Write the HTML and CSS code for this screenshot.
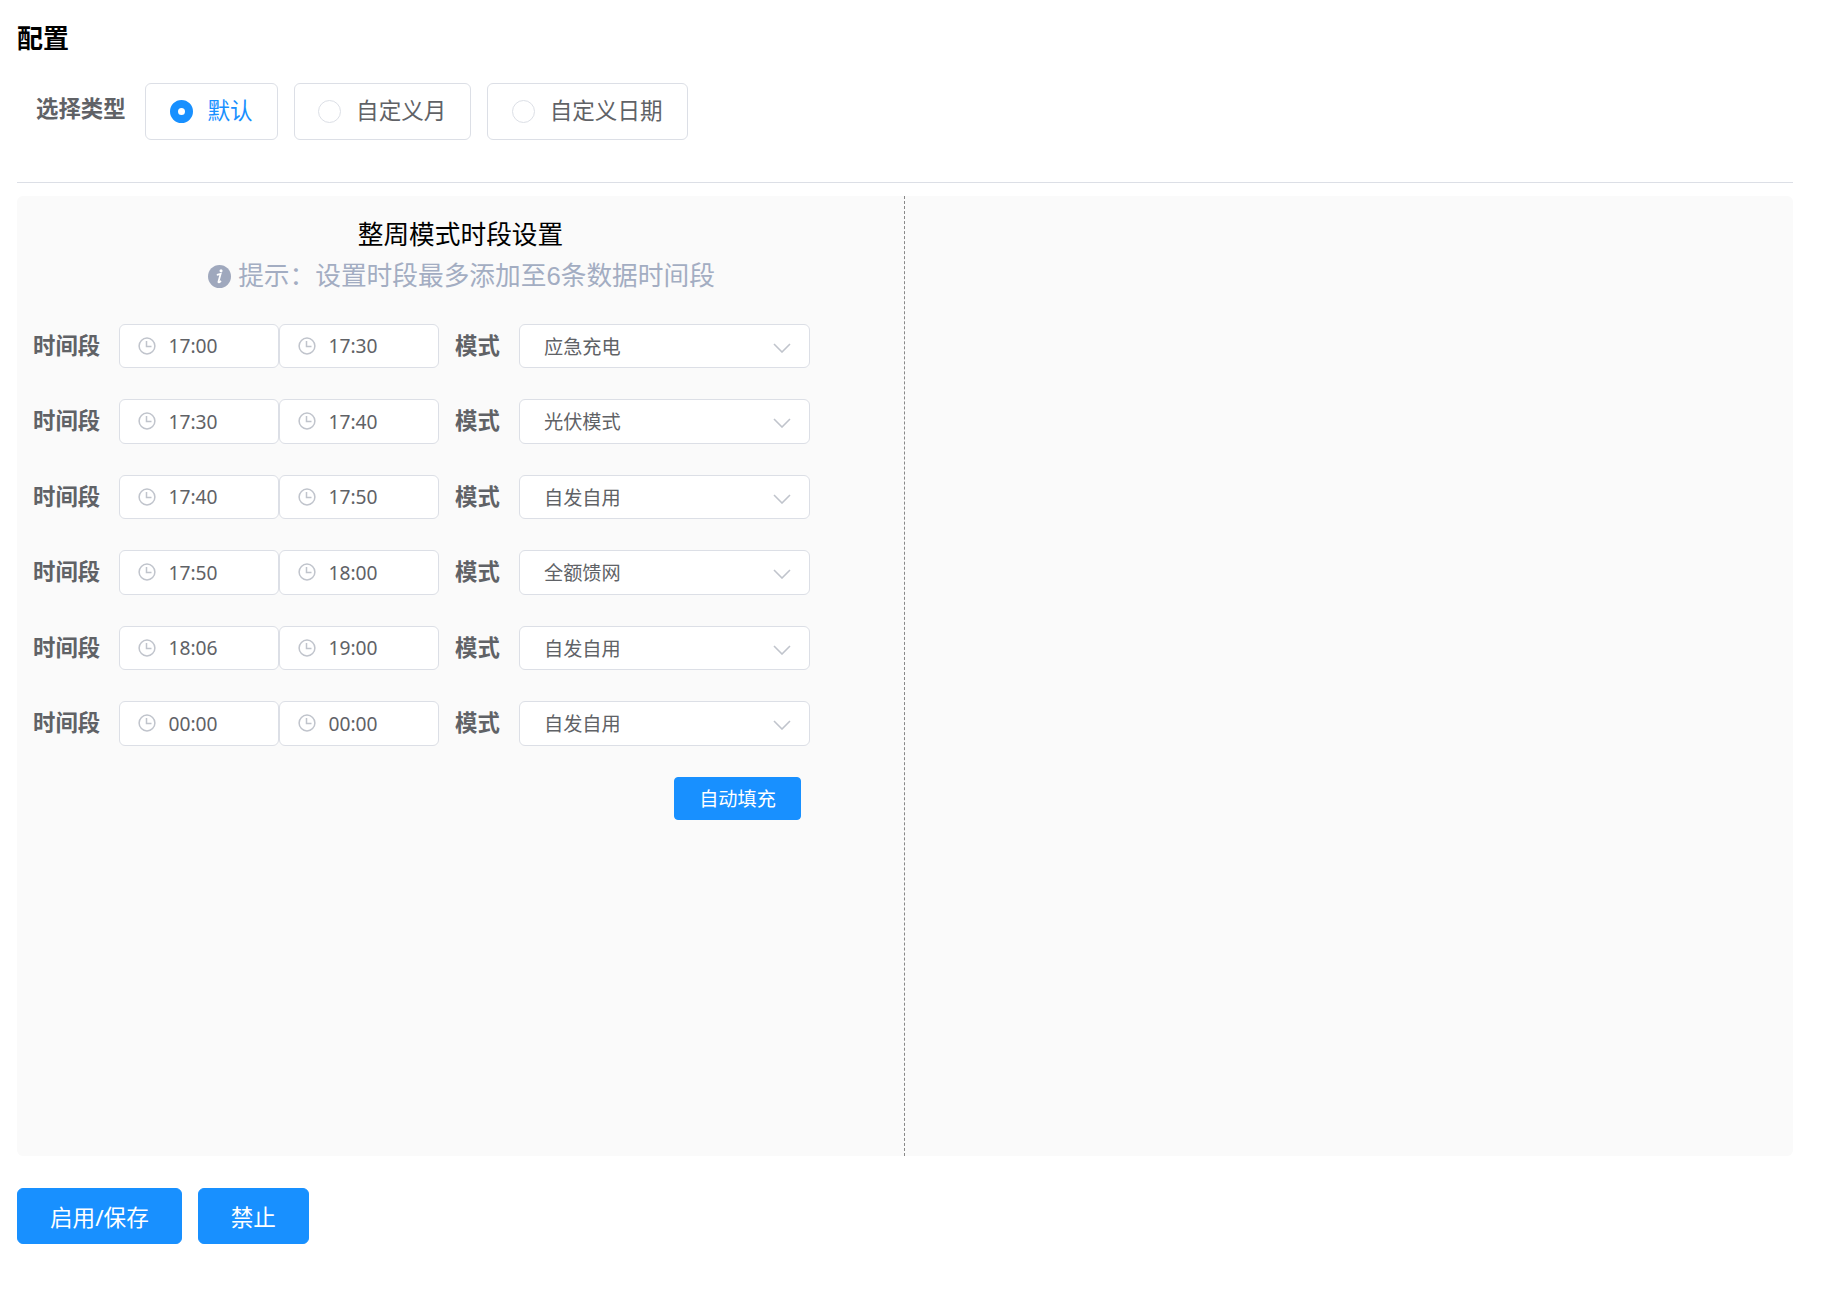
FILE: index.html
```
<!DOCTYPE html>
<html lang="zh-CN">

<head>
    <meta charset="UTF-8">
    <meta name="viewport" content="width=device-width, initial-scale=1.0">
    <title>配置</title>
    <link rel="stylesheet" href="styles.css">
</head>

<body>
    <svg class="sprite">
        <symbol id="clock" viewBox="0 0 18 18">
            <circle cx="9" cy="9" r="7.9" />
            <path d="M8.5 4v5.5h5" />
        </symbol>
        <symbol id="arrow" viewBox="0 0 18 10">
            <path d="M1 1l8 8 8-8" />
        </symbol>
    </svg>

    <h1>配置</h1>

    <div class="type-row">
        <span class="label">选择类型</span>
        <div class="radio checked"><i class="dot"></i><span>默认</span></div>
        <div class="radio"><i class="dot"></i><span>自定义月</span></div>
        <div class="radio"><i class="dot"></i><span>自定义日期</span></div>
    </div>

    <div class="panel">
        <div class="left">
            <h2>整周模式时段设置</h2>
            <p class="tip">
                <svg class="info" viewBox="0 0 24 24">
                    <circle cx="12" cy="12" r="12" />
                    <circle class="mark" cx="13.6" cy="6" r="1.6" />
                    <path class="stem" d="M9.200 10.400c1.300-.2 2.500-.7 4-1.200l-2.300 8.200c-.3 1.300.8 1 2.600-.9" />
                </svg>
                <span>提示：设置时段最多添加至6条数据时间段</span>
            </p>
            <div id="rows"></div>
            <button class="btn fill">自动填充</button>
        </div>
        <div class="right"></div>
    </div>

    <div class="footer">
        <button class="btn">启用/保存</button>
        <button class="btn">禁止</button>
    </div>

    <script>
        const periods = [
            ['17:00', '17:30', '应急充电'],
            ['17:30', '17:40', '光伏模式'],
            ['17:40', '17:50', '自发自用'],
            ['17:50', '18:00', '全额馈网'],
            ['18:06', '19:00', '自发自用'],
            ['00:00', '00:00', '自发自用']
        ];

        function timeInput(time) {
            return `<div class="time"><svg class="clock"><use href="#clock"/></svg><span>${time}</span></div>`;
        }

        document.getElementById('rows').innerHTML = periods.map(([start, end, mode]) => `
            <div class="row">
                <span class="label">时间段</span>
                ${timeInput(start)}${timeInput(end)}
                <span class="label mode">模式</span>
                <div class="select"><span>${mode}</span><svg class="arrow"><use href="#arrow"/></svg></div>
            </div>`).join('');
    </script>
</body>

</html>
```

FILE: styles.css
```
* {
    box-sizing: border-box;
}

body {
    margin: 0;
    padding: 20px 32px 0 17px;
    font-family: "Noto Sans", "Noto Sans CJK SC", sans-serif;
    color: #606266;
    background: #fff;
}

.sprite {
    display: none;
}

h1 {
    margin: 0;
    height: 37px;
    line-height: 37px;
    font-size: 26px;
    color: #000;
}

.label {
    font-size: 22.4px;
    font-weight: bold;
    line-height: 44px;
    white-space: nowrap;
}

.type-row {
    display: flex;
    height: 126px;
    padding: 26px 0 0 19px;
    border-bottom: 1px solid #dcdfe6;
}

.type-row .label {
    width: 109px;
    line-height: 51px;
}

.radio {
    display: flex;
    align-items: center;
    height: 57px;
    margin-right: 16px;
    padding: 0 24px 0 23.5px;
    border: 1px solid #dcdfe6;
    border-radius: 6px;
    font-size: 22.55px;
    line-height: 54px;
}

.radio span {
    margin-top: -2px;
}

.dot {
    width: 23px;
    height: 23px;
    margin-right: 15px;
    border: 1px solid #dcdfe6;
    border-radius: 50%;
}

.checked {
    color: #1890ff;
}

.checked .dot {
    border: 8px solid #1890ff;
}

.panel {
    display: flex;
    height: 960px;
    margin-top: 13px;
    background: #fafafa;
    border-radius: 6px;
}

.left {
    width: 50%;
    border-right: 1px dashed #888;
}

.right {
    width: 50%;
}

h2 {
    margin: 18px 0 0;
    font: 25.7px/42px "Liberation Sans", "Noto Sans CJK SC", sans-serif;
    color: #000;
    text-align: center;
}

.tip {
    display: flex;
    align-items: center;
    justify-content: center;
    gap: 7px;
    margin: 0 0 27.6px;
    padding-left: 2px;
    height: 40px;
    font: 25.7px/40px "Liberation Sans", "Noto Sans CJK SC", sans-serif;
    color: #a3adc2;
}

.info {
    width: 23px;
    height: 23px;
    fill: #9fa8bd;
}

.info .mark {
    fill: #fff;
}

.info .stem {
    fill: none;
    stroke: #fff;
    stroke-width: 1.8;
}

.row {
    display: flex;
    height: 44.5px;
    margin-bottom: 31px;
    padding-left: 16px;
}

.row .label {
    width: 86px;
    line-height: 43px;
}

.row .mode {
    width: 80px;
    padding-left: 16px;
}

.time,
.select {
    display: flex;
    align-items: center;
    background: #fff;
    border: 1px solid #dcdfe6;
    border-radius: 6px;
    font-size: 19.2px;
}

.time {
    width: 160px;
    padding-left: 18px;
}

.clock {
    width: 18px;
    height: 18px;
    margin-right: 12.5px;
    fill: none;
    stroke: #c0c4cc;
    stroke-width: 1.5;
}

.select {
    width: 291px;
    justify-content: space-between;
    padding: 0 18px 0 24px;
}

.arrow {
    width: 18px;
    height: 10px;
    margin-top: 4px;
    fill: none;
    stroke: #c0c4cc;
    stroke-width: 1.6;
}

.btn {
    height: 56px;
    padding: 0 32px;
    border: 1px solid #1890ff;
    border-radius: 6px;
    background: #1890ff;
    color: #fff;
    font-family: inherit;
    font-size: 22.6px;
}

.fill {
    display: block;
    width: 127px;
    height: 43px;
    margin-left: 657px;
    padding: 0;
    border-radius: 4px;
    font-size: 19.2px;
}

.footer {
    display: flex;
    gap: 16px;
    margin-top: 32px;
}
```
